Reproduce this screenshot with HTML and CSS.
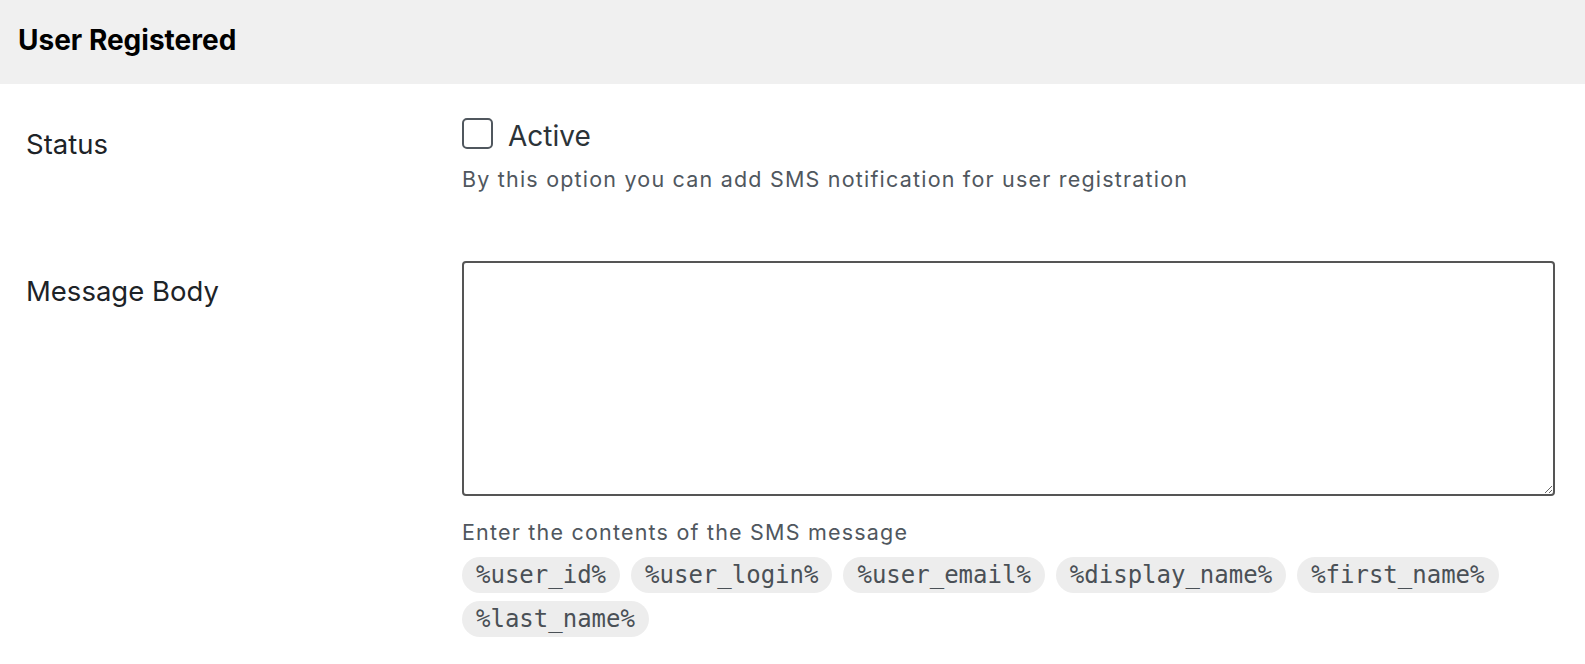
FILE: index.html
```html
<!DOCTYPE html>
<html lang="en">
<head>
<meta charset="utf-8">
<title>User Registered</title>
<link rel="stylesheet" href="styles.css">
</head>
<body>
<section class="panel">
  <header class="panel-head">
    <h2 class="panel-title">User Registered</h2>
  </header>
  <div class="form-row form-row--status">
    <div class="row-label row-label--status">Status</div>
    <div class="row-field">
      <label class="check">
        <input type="checkbox" class="check-box">
        <span class="check-text">Active</span>
      </label>
      <p class="desc desc--status">By this option you can add SMS notification for user registration</p>
    </div>
  </div>
  <div class="form-row form-row--message">
    <div class="row-label row-label--message">Message Body</div>
    <div class="row-field">
      <textarea class="msg-body"></textarea>
      <p class="desc desc--message">Enter the contents of the SMS message</p>
      <div class="chips">
        <code class="chip">%user_id%</code>
        <code class="chip">%user_login%</code>
        <code class="chip">%user_email%</code>
        <code class="chip">%display_name%</code>
        <code class="chip">%first_name%</code>
        <code class="chip">%last_name%</code>
      </div>
    </div>
  </div>
</section>
</body>
</html>
```

FILE: styles.css
```css
html, body {
  margin: 0;
  padding: 0;
  background: #ffffff;
}

body {
  font-family: Inter, "Noto Sans", "Liberation Sans", sans-serif;
  color: #1d2327;
}

.panel {
  display: flex;
  flex-direction: column;
}

.panel-head {
  height: 84px;
  background: #f0f0f0;
  display: flex;
  align-items: center;
  padding-left: 18px;
}

.panel-title {
  margin: 0;
  font-size: 28px;
  font-weight: 700;
  color: #000000;
  line-height: 1.2;
  padding-bottom: 2px;
}

.form-row {
  display: flex;
  padding: 34px 30px 0 26px;
}

.form-row--status {
  padding-bottom: 33px;
}

.row-label {
  width: 436px;
  flex: none;
  font-size: 27.5px;
  line-height: 1.2;
  color: #1d2327;
}

.row-label--status {
  margin-top: 10px;
}

.row-label--message {
  margin-top: 14px;
}

.row-field {
  flex: 1;
  display: flex;
  flex-direction: column;
}

.check {
  display: flex;
  align-items: flex-start;
  gap: 15px;
}

.check-box {
  appearance: none;
  -webkit-appearance: none;
  margin: 0;
  width: 31px;
  height: 31px;
  border: 2px solid #50575e;
  border-radius: 5px;
  background: #ffffff;
  box-sizing: border-box;
}

.check-text {
  font-size: 28px;
  line-height: 36px;
  color: #2c3338;
}

.desc {
  margin: 0;
  font-size: 21.5px;
  letter-spacing: 1.2px;
  line-height: 30px;
  color: #50575e;
}

.desc--status {
  margin-top: 10px;
}

.msg-body {
  display: block;
  box-sizing: border-box;
  width: 100%;
  height: 235px;
  margin: 0;
  border: 2px solid #555555;
  border-radius: 4px;
  background: #ffffff;
  resize: both;
}

.desc--message {
  margin-top: 21px;
}

.chips {
  display: flex;
  flex-wrap: wrap;
  column-gap: 11px;
  row-gap: 8px;
  margin-top: 10px;
  padding-bottom: 20px;
}

.chip {
  font-family: "DejaVu Sans Mono", "Liberation Mono", monospace;
  font-size: 24px;
  line-height: 28px;
  padding: 4px 14px;
  border-radius: 18px;
  background: #ededed;
  color: #4a5056;
}
```
